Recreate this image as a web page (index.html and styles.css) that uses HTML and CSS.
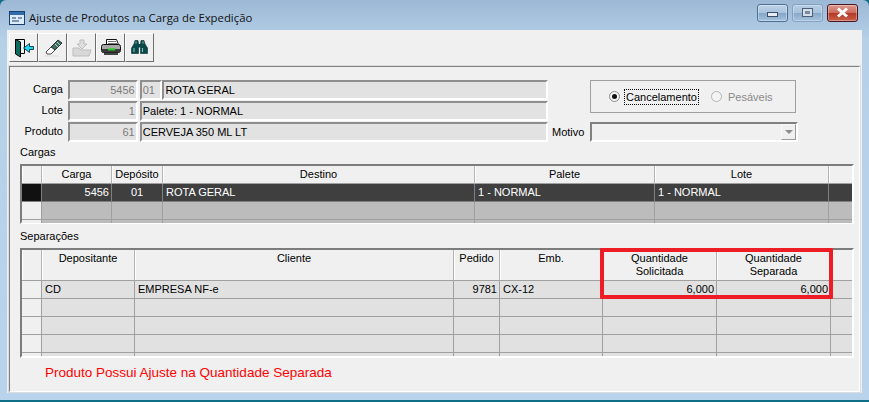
FILE: index.html
```html
<!DOCTYPE html>
<html lang="pt-BR">
<head>
  <meta charset="UTF-8" />
  <title>Ajuste de Produtos na Carga de Expedição</title>
  <link rel="stylesheet" href="styles.css">
</head>
<body>
  <div class="window">
    <div class="titlebar">
      <svg class="app-icon" width="16" height="16" viewBox="0 0 16 16">
        <rect x="0.5" y="1.5" width="15" height="13" fill="#dcecf8" stroke="#1c3f6e"/>
        <rect x="1" y="2" width="14" height="3" fill="#2f6db0"/>
        <path d="M3 8h4M3 11h7M9 8h4" stroke="#1c3f6e" fill="none"/>
      </svg>
      <div class="title">Ajuste de Produtos na Carga de Expedição</div>
      <div class="caption-btns">
        <div class="cap-btn"><span class="cap-min"></span></div>
        <div class="cap-btn cap-dim"><span class="cap-max"></span></div>
        <div class="cap-btn cap-close">
          <svg width="13" height="11" viewBox="0 0 13 11"><path d="M2 1.5l9 8M11 1.5l-9 8" stroke="#fff" stroke-width="3" fill="none"/></svg>
        </div>
      </div>
    </div>

    <div class="client">
      <div class="toolbar">
        <div class="tool">
          <svg width="20" height="20" viewBox="0 0 20 20">
            <path d="M1.5 1.5h9v14h-9z" fill="#e8f4f4" stroke="#000"/>
            <path d="M1.5 1.5l5 2.500v15l-5-3z" fill="#0b6b5f" stroke="#000"/>
            <path d="M19.500 8.500h-4v-3l-6 4.500 6 4.500v-3h4z" fill="#18d8f8" stroke="#000" stroke-width="0.7"/>
          </svg>
        </div>
        <div class="tool">
          <svg width="20" height="18" viewBox="0 0 20 18">
            <path d="M15 1l4 3-7 7-4-3z" fill="#3f6f62" stroke="#111" stroke-width="0.8"/>
            <path d="M14 3l3 3M12 5l3 3" stroke="#b8d0c8" fill="none"/>
            <path d="M8 8l4 3-4 4H4l-1-2z" fill="#fff" stroke="#222" stroke-width="0.8"/>
            <path d="M2 17h14" stroke="#dcdcdc" fill="none"/>
          </svg>
        </div>
        <div class="tool">
          <svg width="20" height="18" viewBox="0 0 20 18">
            <path d="M1 9h6l2 2h10l-2 6H1z" fill="#d8d8d8" stroke="#bdbdbd"/>
            <path d="M8 1h4v4h3l-5 5-5-5h3z" fill="#dedede" stroke="#bdbdbd"/>
          </svg>
        </div>
        <div class="tool">
          <svg width="20" height="17" viewBox="0 0 20 17">
            <path d="M5.500 0.500h10l2 5h-12z" fill="#fff" stroke="#111"/>
            <path d="M7 2.500h8M7 4.500h9" stroke="#777" fill="none"/>
            <rect x="0.500" y="5.500" width="19" height="8" rx="2" fill="#a8a8a8" stroke="#111"/>
            <rect x="1" y="10" width="18" height="3.500" fill="#3a3a3a"/>
            <rect x="7" y="9.500" width="7" height="2" fill="#1fd01f"/>
            <rect x="3" y="14" width="14" height="2" fill="#444"/>
          </svg>
        </div>
        <div class="tool">
          <svg width="17" height="15" viewBox="0 0 17 15">
            <path d="M3 4l1-3.500h3L7.500 4v9.500H0.500V8zM14 4l-1-3.500h-3L9.500 4v9.500h7V8z" fill="#0b4a4a" stroke="#052e2e" stroke-width="0.6"/>
            <path d="M7 4h3v3.500H7z" fill="#0b4a4a"/>
            <path d="M3 8v4M11.500 8v4M5 1.500v2M12 1.500v2" stroke="#8fc4c4" fill="none"/>
          </svg>
        </div>
      </div>

      <div class="panel">
        <div class="form">
          <div class="fields">
            <div class="field-row">
              <label class="field-label">Carga</label>
              <div class="input input-num input-grey">5456</div>
              <div class="input input-dep input-grey">01</div>
              <div class="input input-name">ROTA GERAL</div>
            </div>
            <div class="field-row">
              <label class="field-label">Lote</label>
              <div class="input input-num input-grey">1</div>
              <div class="input input-wide">Palete: 1 - NORMAL</div>
            </div>
            <div class="field-row">
              <label class="field-label">Produto</label>
              <div class="input input-num input-grey">61</div>
              <div class="input input-wide">CERVEJA 350 ML LT</div>
            </div>
          </div>
          <div class="side">
            <div class="radio-group">
              <div class="radio-item">
                <span class="radio radio-on"></span>
                <span class="radio-text radio-focus">Cancelamento</span>
              </div>
              <div class="radio-item radio-disabled">
                <span class="radio"></span>
                <span class="radio-text">Pesáveis</span>
              </div>
            </div>
            <div class="motivo-row">
              <label class="motivo-label">Motivo</label>
              <div class="combo"><span class="combo-btn"><i></i></span></div>
            </div>
          </div>
        </div>

        <div class="section-label label-cargas">Cargas</div>
        <div class="grid grid-cargas">
          <div class="row row-head cols-cargas">
            <div class="cell ind"></div>
            <div class="cell center">Carga</div>
            <div class="cell center">Depósito</div>
            <div class="cell center">Destino</div>
            <div class="cell center">Palete</div>
            <div class="cell center">Lote</div>
            <div class="cell"></div>
          </div>
          <div class="row row-selected cols-cargas">
            <div class="cell ind"></div>
            <div class="cell right">5456</div>
            <div class="cell center">01</div>
            <div class="cell">ROTA GERAL</div>
            <div class="cell">1 - NORMAL</div>
            <div class="cell">1 - NORMAL</div>
            <div class="cell"></div>
          </div>
          <div class="row row-empty cols-cargas">
            <div class="cell ind"></div><div class="cell"></div><div class="cell"></div><div class="cell"></div><div class="cell"></div><div class="cell"></div><div class="cell"></div>
          </div>
          <div class="row row-empty row-cut cols-cargas">
            <div class="cell ind"></div><div class="cell"></div><div class="cell"></div><div class="cell"></div><div class="cell"></div><div class="cell"></div><div class="cell"></div>
          </div>
        </div>

        <div class="section-label label-sep">Separações</div>
        <div class="grid grid-sep">
          <div class="row row-head row-tall cols-sep">
            <div class="cell ind"></div>
            <div class="cell center">Depositante</div>
            <div class="cell center">Cliente</div>
            <div class="cell center">Pedido</div>
            <div class="cell center">Emb.</div>
            <div class="cell center">Quantidade<br>Solicitada</div>
            <div class="cell center">Quantidade<br>Separada</div>
            <div class="cell"></div>
          </div>
          <div class="row cols-sep">
            <div class="cell ind"></div>
            <div class="cell">CD</div>
            <div class="cell">EMPRESA NF-e</div>
            <div class="cell right">9781</div>
            <div class="cell">CX-12</div>
            <div class="cell right">6,000</div>
            <div class="cell right">6,000</div>
            <div class="cell"></div>
          </div>
          <div class="row cols-sep">
            <div class="cell ind"></div><div class="cell"></div><div class="cell"></div><div class="cell"></div><div class="cell"></div><div class="cell"></div><div class="cell"></div><div class="cell"></div>
          </div>
          <div class="row cols-sep">
            <div class="cell ind"></div><div class="cell"></div><div class="cell"></div><div class="cell"></div><div class="cell"></div><div class="cell"></div><div class="cell"></div><div class="cell"></div>
          </div>
          <div class="row cols-sep">
            <div class="cell ind"></div><div class="cell"></div><div class="cell"></div><div class="cell"></div><div class="cell"></div><div class="cell"></div><div class="cell"></div><div class="cell"></div>
          </div>
          <div class="row row-cut cols-sep">
            <div class="cell ind"></div><div class="cell"></div><div class="cell"></div><div class="cell"></div><div class="cell"></div><div class="cell"></div><div class="cell"></div><div class="cell"></div>
          </div>
          <div class="highlight"></div>
        </div>

        <div class="message">Produto Possui Ajuste na Quantidade Separada</div>
      </div>
    </div>
  </div>
</body>
</html>
```

FILE: styles.css
```css
* {
  box-sizing: border-box;
}

html, body {
  margin: 0;
  height: 100%;
  overflow: hidden;
  background: #0f6f86;
}

body {
  font-family: 'Liberation Sans', Arial, sans-serif;
  font-size: 11px;
  color: #000;
}

.window {
  width: 869px;
  height: 400px;
  padding: 0 7px 7px;
  border-radius: 6px 6px 0 0;
  background: linear-gradient(180deg, #9cb8d4 0, #b6d0e8 40px, #b9d3ec 100%);
  display: flex;
  flex-direction: column;
}

.titlebar {
  height: 30px;
  padding-top: 5px;
  flex: none;
  display: flex;
  align-items: center;
}

.app-icon {
  margin: 0 4px 0 2px;
}

.title {
  font-family: 'Open Sans', sans-serif;
  font-size: 11.35px;
  color: #111;
  flex: 1;
}

.caption-btns {
  display: flex;
  gap: 4px;
  margin: -10px 4px 0 0;
}

.cap-btn {
  width: 31px;
  height: 18px;
  border: 1px solid #4f6f92;
  border-radius: 3px;
  background: linear-gradient(180deg, #bcd2e8 0, #a8c2dc 50%, #84a6c8 52%, #a4c2de 100%);
  box-shadow: inset 0 0 0 1px rgba(255, 255, 255, 0.35);
  display: flex;
  align-items: center;
  justify-content: center;
}

.cap-dim {
  border-color: #7f9dbc;
  opacity: 0.85;
}

.cap-close {
  border-color: #4a1420;
  background: linear-gradient(180deg, #dd9a90 0, #c96a5c 50%, #b53a26 52%, #c8604a 100%);
}

.cap-min {
  width: 11px;
  height: 5px;
  margin-top: 3px;
  background: #e8edf3;
  border: 1px solid #3e4e62;
}

.cap-max {
  width: 11px;
  height: 9px;
  background: #dfe4ea;
  border: 1px solid #3e4e62;
  display: flex;
  align-items: center;
  justify-content: center;
}

.cap-max::after {
  content: "";
  width: 5px;
  height: 3px;
  background: #6f8198;
}

.client {
  flex: 1;
  background: #f0f0f0;
  display: flex;
  flex-direction: column;
  padding-left: 1px;
}

.toolbar {
  height: 35px;
  flex: none;
  padding: 3px 0 0 1px;
  display: flex;
  gap: 0;
}

.tool {
  width: 29px;
  height: 29px;
  border: 1px solid;
  border-color: #fff #6e6e6e #6e6e6e #fff;
  display: flex;
  align-items: center;
  justify-content: center;
}

.panel {
  flex: 1;
  margin-right: 1px;
  border: 2px solid;
  border-color: #808080 #fff #fff #808080;
  padding: 13px 0 0 10px;
  outline: 1px solid #dcdcdc;
  outline-offset: -1px;
  display: flex;
  flex-direction: column;
}

.form {
  display: flex;
  height: 62px;
}

.fields {
  width: 538px;
  margin-left: -10px;
  display: flex;
  flex-direction: column;
  gap: 1px;
}

.field-row {
  height: 20px;
  display: flex;
}

.field-label {
  width: 54px;
  margin-right: 5px;
  text-align: right;
  line-height: 18px;
}

.input {
  height: 20px;
  border: 2px solid;
  border-color: #8e8e8e #fff #fff #8e8e8e;
  background: #ededed;
  line-height: 16px;
  padding: 0 1px;
  white-space: nowrap;
}

.input-grey {
  background: #e2e2e2;
  color: #7d7d7d;
}

.input-num {
  width: 71px;
  margin-right: 2px;
  text-align: right;
}

.input-dep {
  width: 23px;
}

.input-name {
  width: 393px;
  background: #e2e2e2;
}

.input-wide {
  width: 416px;
  background: #e2e2e2;
}

.side {
  margin-left: 4px;
  width: 248px;
  display: flex;
  flex-direction: column;
  justify-content: space-between;
}

.radio-group {
  margin-left: 38px;
  width: 206px;
  height: 33px;
  border: 1px solid #a0a0a0;
  display: flex;
  align-items: center;
  padding-left: 18px;
  gap: 13px;
}

.radio-item {
  display: flex;
  align-items: center;
  gap: 5px;
}

.radio {
  width: 11px;
  height: 11px;
  border-radius: 50%;
  border: 1px solid #8c8c8c;
  background: #f4f4f4;
  display: flex;
  align-items: center;
  justify-content: center;
}

.radio-on::after {
  content: "";
  width: 5px;
  height: 5px;
  border-radius: 50%;
  background: #111;
}

.radio-text {
  line-height: 14px;
  padding: 0 1px;
}

.radio-focus {
  outline: 1px dotted #000;
}

.radio-disabled {
  color: #8a8a8a;
}

.radio-disabled .radio {
  border-color: #b4b4b4;
}

.motivo-row {
  display: flex;
  align-items: center;
  height: 20px;
}

.motivo-label {
  width: 38px;
}

.combo {
  width: 208px;
  height: 20px;
  border: 2px solid;
  border-color: #808080 #fff #fff #808080;
  background: #f0f0f0;
  display: flex;
  justify-content: flex-end;
}

.combo-btn {
  width: 15px;
  height: 16px;
  border: 1px solid;
  border-color: #f8f8f8 #9a9a9a #9a9a9a #f8f8f8;
  display: flex;
  align-items: center;
  justify-content: center;
}

.combo-btn i {
  border-left: 4px solid transparent;
  border-right: 4px solid transparent;
  border-top: 4px solid #8c8c8c;
}

.section-label {
  height: 14px;
  line-height: 14px;
}

.label-cargas {
  margin-top: 3px;
}

.label-sep {
  margin-top: 5px;
}

.grid {
  position: relative;
  width: 834px;
  border: 2px solid;
  border-color: #7c7c7c #fff #fff #7c7c7c;
}

.grid-cargas {
  margin-top: 5px;
  height: 60px;
}

.grid-sep {
  margin-top: 5px;
  height: 110px;
}

.row {
  height: 18px;
  display: grid;
  background: #e1e1e1;
}

.cols-cargas {
  grid-template-columns: 20px 70px 51px 312px 180px 174px 23px;
}

.cols-sep {
  grid-template-columns: 20px 93px 319px 46px 103px 114px 114px 21px;
}

.cell {
  border-right: 1px solid #a0a0a0;
  border-bottom: 1px solid #a0a0a0;
  padding: 0 3px;
  line-height: 17px;
  white-space: nowrap;
  overflow: hidden;
}

.cell:last-child {
  border-right: 0;
}

.center {
  text-align: center;
}

.right {
  text-align: right;
  padding-right: 2px;
}

.ind {
  background: #f0f0f0;
}

.row-head {
  background: #f0f0f0;
}

.row-head .cell {
  border-right-color: #b4b4b4;
  box-shadow: inset 1px 0 0 #fff;
}

.row-tall {
  height: 31px;
}

.row-tall .cell {
  line-height: 13px;
  padding-top: 2px;
}

.row-selected {
  background: #3f3f3f;
  color: #fff;
}

.row-selected .cell {
  border-color: #808080;
}

.row-selected .ind {
  background: #111;
}

.row-empty {
  background: #bcbcbc;
}

.row-cut {
  height: 3px;
}

.row-cut .cell {
  border-bottom: 0;
}

.highlight {
  position: absolute;
  left: 578px;
  top: -2px;
  width: 233px;
  height: 51px;
  border: 4px solid #ee1c25;
  border-radius: 1px;
  pointer-events: none;
}

.message {
  margin: 7px 0 0 25px;
  font-size: 13.5px;
  color: #f00;
  line-height: 15px;
}
```
